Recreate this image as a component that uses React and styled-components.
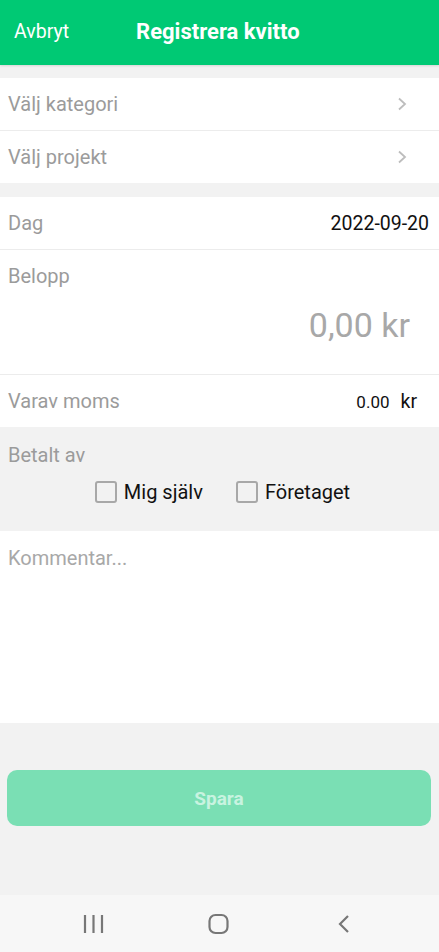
import React, { useState } from 'react';
import styled, { createGlobalStyle } from 'styled-components';

const GlobalStyle = createGlobalStyle`
    html, body {
        margin: 0;
        padding: 0;
        background: #f2f2f2;
        font-family: Roboto, "Noto Sans", "Liberation Sans", sans-serif;
    }
    * { box-sizing: border-box; }
`;

const Page = styled.div`
    width: 439px;
    height: 952px;
    display: flex;
    flex-direction: column;
    background: #f2f2f2;
    overflow: hidden;
`;

const Header = styled.header`
    height: 65px;
    background: #00c974;
    display: flex;
    align-items: center;
    padding: 0 14px;
    gap: 67px;
    box-shadow: 0 1px 2px rgba(0, 0, 0, 0.12);
    flex-shrink: 0;
`;

const Cancel = styled.span`
    color: #ffffff;
    font-size: 19.5px;
    padding-bottom: 2px;
`;

const Title = styled.h1`
    margin: 0;
    color: #ffffff;
    font-size: 22px;
    font-weight: 700;
    padding-bottom: 2px;
`;

const Section = styled.div`
    background: #ffffff;
    margin-top: ${(p) => p.gap || 0}px;
    display: flex;
    flex-direction: column;
`;

const Row = styled.div`
    height: ${(p) => (p.last ? 52 : 53)}px;
    display: flex;
    align-items: center;
    justify-content: space-between;
    padding: 0 8px;
    border-bottom: ${(p) => (p.last ? 'none' : '1px solid #ececec')};
`;

const Label = styled.span`
    color: #9b9b9b;
    font-size: 20px;
`;

const Value = styled.span`
    color: #111111;
    font-size: ${(p) => p.size || 20}px;
    margin-right: ${(p) => p.mr || 0}px;
`;

const Chevron = styled.svg`
    width: 10px;
    height: 14px;
    margin-right: 24px;
`;

const AmountBlock = styled.div`
    height: 125px;
    display: flex;
    flex-direction: column;
    padding: 14px 8px 0 8px;
    border-bottom: 1px solid #ececec;
`;

const Amount = styled.div`
    align-self: flex-end;
    margin-top: 17px;
    margin-right: 21px;
    color: #a8a8a8;
    font-size: 34px;
`;

const Paid = styled.div`
    height: 104px;
    background: #f2f2f2;
    padding: 16px 8px 0 8px;
    display: flex;
    flex-direction: column;
`;

const Options = styled.div`
    display: flex;
    justify-content: center;
    gap: 33px;
    margin-top: 13px;
    padding-left: 6px;
`;

const Option = styled.label`
    display: flex;
    align-items: center;
    gap: 7px;
    color: #111111;
    font-size: 20px;
    cursor: pointer;
`;

const Box = styled.span`
    width: 22px;
    height: 22px;
    border: 2px solid #a8a8a8;
    border-radius: 3px;
    background: ${(p) => (p.checked ? '#00c974' : 'transparent')};
`;

const Comment = styled.textarea`
    height: 192px;
    border: none;
    resize: none;
    outline: none;
    background: #ffffff;
    padding: 15px 8px;
    font-family: inherit;
    font-size: 20px;
    color: #111111;
    flex-shrink: 0;
    &::placeholder {
        color: #a8a8a8;
    }
`;

const Footer = styled.div`
    flex: 1;
    padding: 47px 8px 0 7px;
`;

const SaveButton = styled.button`
    width: 100%;
    height: 56px;
    border: none;
    border-radius: 10px;
    background: #7adfb4;
    color: #c8f3e0;
    font-family: inherit;
    font-size: 19px;
    font-weight: 700;
`;

const NavBar = styled.nav`
    height: 57px;
    background: #f7f7f7;
    display: flex;
    align-items: center;
    padding: 0 0 0 83px;
    flex-shrink: 0;
`;

const NavIcon = styled.svg`
    width: ${(p) => p.w}px;
    height: 22px;
    margin-left: ${(p) => p.ml || 0}px;
`;

const ChevronIcon = () => (
    <Chevron viewBox="0 0 10 14">
        <path d="M2 1.5 L8 7 L2 12.5" fill="none" stroke="#bdbdbd" strokeWidth="1.8" />
    </Chevron>
);

const App = () => {
    const [paidBy, setPaidBy] = useState(null);

    return (
        <Page>
            <GlobalStyle />
            <Header>
                <Cancel>Avbryt</Cancel>
                <Title>Registrera kvitto</Title>
            </Header>

            <Section gap={13}>
                <Row>
                    <Label>Välj kategori</Label>
                    <ChevronIcon />
                </Row>
                <Row last>
                    <Label>Välj projekt</Label>
                    <ChevronIcon />
                </Row>
            </Section>

            <Section gap={14}>
                <Row>
                    <Label>Dag</Label>
                    <Value size={19.5} mr={2}>2022-09-20</Value>
                </Row>
                <AmountBlock>
                    <Label>Belopp</Label>
                    <Amount>0,00 kr</Amount>
                </AmountBlock>
                <Row last>
                    <Label>Varav moms</Label>
                    <span>
                        <Value size={17} mr={11}>0.00</Value>
                        <Value size={19.5} mr={14}>kr</Value>
                    </span>
                </Row>
            </Section>

            <Paid>
                <Label>Betalt av</Label>
                <Options>
                    <Option onClick={() => setPaidBy('me')}>
                        <Box checked={paidBy === 'me'} />
                        Mig själv
                    </Option>
                    <Option onClick={() => setPaidBy('company')}>
                        <Box checked={paidBy === 'company'} />
                        Företaget
                    </Option>
                </Options>
            </Paid>

            <Comment placeholder="Kommentar..." />

            <Footer>
                <SaveButton>Spara</SaveButton>
            </Footer>

            <NavBar>
                <NavIcon w={21} viewBox="0 0 21 22">
                    <path d="M2 2v18M10.5 2v18M19 2v18" stroke="#777" strokeWidth="2.2" fill="none" />
                </NavIcon>
                <NavIcon w={21} ml={104} viewBox="0 0 21 22">
                    <rect x="1.5" y="2" width="18" height="18" rx="6" stroke="#777" strokeWidth="2.2" fill="none" />
                </NavIcon>
                <NavIcon w={13} ml={108} viewBox="0 0 13 22">
                    <path d="M11 3 L3 11 L11 19" stroke="#777" strokeWidth="2.2" fill="none" />
                </NavIcon>
            </NavBar>
        </Page>
    );
};

export default App;
